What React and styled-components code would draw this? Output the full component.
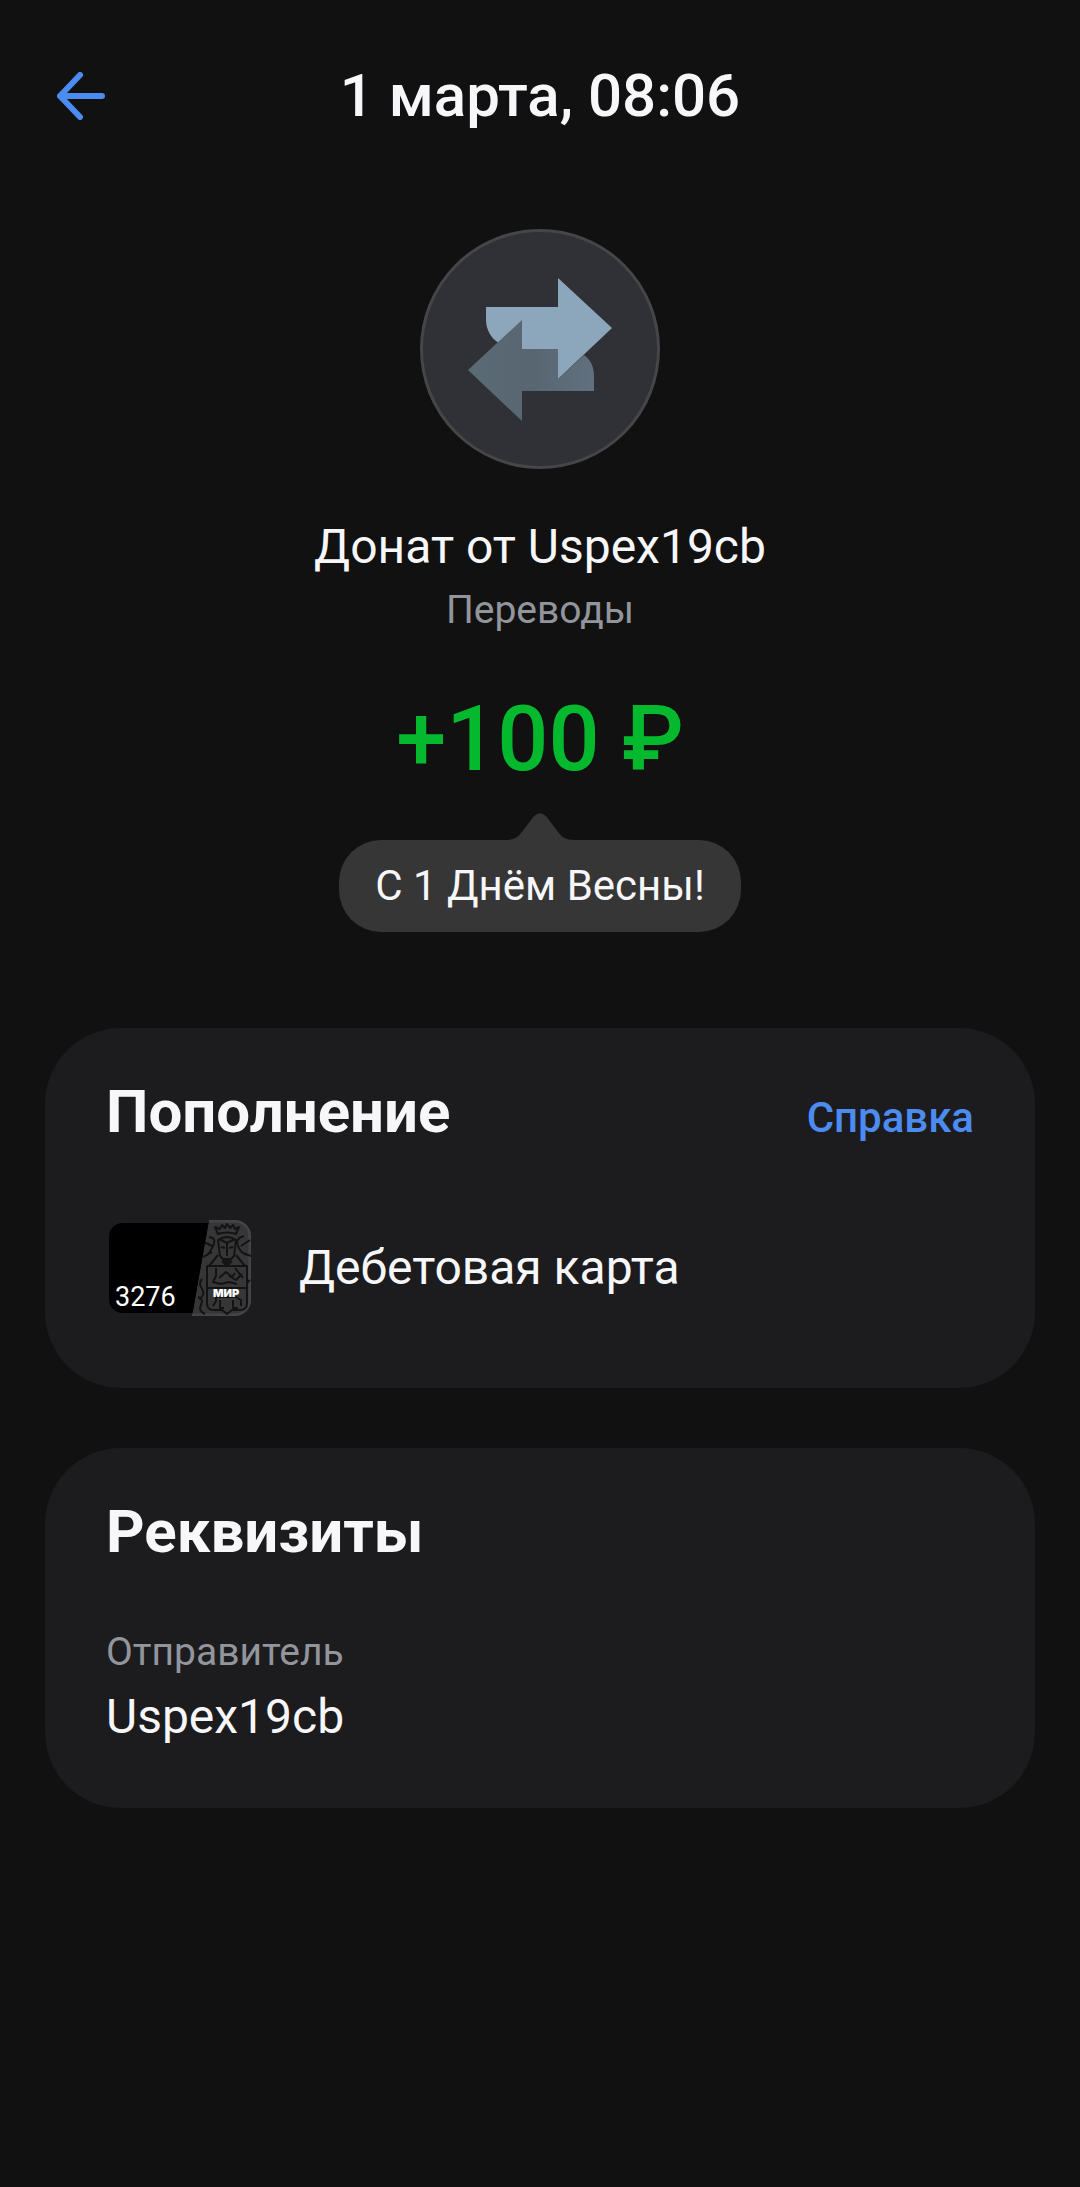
import React from "react";
import styled, { createGlobalStyle } from "styled-components";

const GlobalStyle = createGlobalStyle`
  * {
    box-sizing: border-box;
  }

  body {
    margin: 0;
    background: #111111;
    color: #f7f7fa;
    font-family: Roboto, "Noto Sans", sans-serif;
  }
`;

const Page = styled.div`
  min-height: 100vh;
  padding-bottom: 60px;
`;

// Header
const Header = styled.header`
  display: grid;
  grid-template-columns: 72px 1fr 72px;
  align-items: center;
  padding: 60px 45px 0;
`;

const BackButton = styled.button`
  display: flex;
  justify-content: center;
  padding: 0;
  border: 0;
  background: none;
  color: #4c8bf0;
  cursor: pointer;
`;

const Title = styled.h1`
  margin: 0;
  font-size: 60px;
  line-height: 72px;
  font-weight: 500;
  text-align: center;
`;

// Operation summary
const Summary = styled.section`
  display: flex;
  flex-direction: column;
  align-items: center;
  padding: 97px 45px 96px;
  text-align: center;
`;

const Avatar = styled.div`
  display: flex;
  width: 240px;
  height: 240px;
  border: 3px solid #464648;
  border-radius: 50%;
  background: #303136;
`;

const Name = styled.h2`
  margin: 48px 0 9px;
  font-size: 48px;
  line-height: 60px;
  font-weight: 400;
`;

const Category = styled.p`
  margin: 0;
  color: #93959c;
  font-size: 39px;
  line-height: 48px;
`;

const Amount = styled.p`
  margin: 54px 0 48px;
  color: #05b92f;
  font-size: 90px;
  line-height: 104px;
  font-weight: 500;
`;

const Message = styled.p`
  position: relative;
  margin: 0;
  padding: 20px 36px;
  border-radius: 42px;
  background: #363636;
  font-size: 42px;
  line-height: 52px;
`;

const MessageTail = styled.svg`
  position: absolute;
  bottom: 100%;
  left: 50%;
  transform: translateX(-50%);
`;

// Cards
const Cards = styled.main`
  display: flex;
  flex-direction: column;
  gap: 60px;
  padding: 0 45px;
`;

const Card = styled.section`
  padding: 48px 61px 60px;
  border-radius: 76px;
  background: #1c1c1e;
`;

const CardHeader = styled.div`
  display: flex;
  align-items: baseline;
  justify-content: space-between;
  margin-bottom: 60px;
`;

const CardTitle = styled.h2`
  margin: 0;
  font-size: 60px;
  line-height: 72px;
  font-weight: 700;
`;

const CardLink = styled.a`
  color: #4c8bf0;
  font-size: 42px;
  line-height: 52px;
  font-weight: 500;
  text-decoration: none;
`;

const Account = styled.div`
  display: flex;
  align-items: center;
  gap: 43px;
  height: 120px;
  font-size: 48px;
  line-height: 60px;
`;

const Details = styled.dl`
  margin: 0;
`;

const DetailLabel = styled.dt`
  margin-bottom: 10px;
  color: #93959c;
  font-size: 39px;
  line-height: 48px;
`;

const DetailValue = styled.dd`
  margin: 0;
  font-size: 48px;
  line-height: 62px;
`;

function BackIcon() {
  return (
    <svg width="48" height="48" viewBox="0 0 48 48" fill="none" aria-hidden="true">
      <path
        d="M23 3 3 24l20 21M3 24h42"
        stroke="currentColor"
        strokeWidth="6"
        strokeLinecap="round"
        strokeLinejoin="round"
      />
    </svg>
  );
}

function TransferIcon() {
  return (
    <svg width="234" height="234" viewBox="4 3 234 234" aria-hidden="true">
      <defs>
        <linearGradient id="back-arrow" x1="0" x2="1">
          <stop offset="0" stopColor="#5b6b76" />
          <stop offset="0.5" stopColor="#576671" />
          <stop offset="1" stopColor="#61707e" />
        </linearGradient>
      </defs>
      <path
        d="M67 78h72V49l54 50-54 51v-30h-36c-22 0-36-12-36-30z"
        fill="#8ca7bb"
      />
      <path
        d="M49 141l54-50v29h36v30l26-24c7 5 10 12 10 21v15h-72v30z"
        fill="url(#back-arrow)"
      />
    </svg>
  );
}

function BankCard() {
  return (
    <svg width="150" height="100" viewBox="0 0 150 100" role="img" aria-label="Карта 3276, МИР">
      <defs>
        <clipPath id="card-side">
          <path d="M103 2h26a16 16 0 0 1 16 16v64a16 16 0 0 1-16 16H86z" />
        </clipPath>
      </defs>
      <rect x="3" y="5" width="138" height="90" rx="14" fill="#000" />
      <g clipPath="url(#card-side)">
        <path d="M103 2h47v96H86z" fill="#363636" />
        <path d="M103 3h26a15 15 0 0 1 15 15v64a15 15 0 0 1-15 15H86" fill="none" stroke="#444" strokeWidth="3" />
        <g fill="none" stroke="#131313" strokeWidth="2" strokeLinejoin="round">
          {/* Crown and helmet */}
          <path d="M112 16l-3-7 5 2 2-4 3 3 2-4 3 4 3-3 2 4 4-2-3 7q-9-3-18 0z" />
          <path d="M112 22q9-6 18 0l-2 16-7 7-7-7z" />
          <path d="M113 21l8 4 8-4M121 25v13M115 29l4 1M127 29l-4 1" />
          <path d="M112 37l-9 11h36l-9-11M116 43l5 5 5-5M118 41h6M121 41v6" />
          {/* Ribbons */}
          <path d="M103 19q8 1 4 9t-6 9M138 18q-9 2-6 10t10 9M98 24l8 4M144 22l-9 6M97 39l9-5M145 38l-10-4" />
          {/* Shield */}
          <path d="M101 48h40v37q0 7-7 7h-8l-5 4-5-4h-8q-7 0-7-7zM101 70h40" />
          <path d="M110 50v8l-3 6 8 2 8-2 8 2M113 60l7-6 6 5 3-4M123 58l7 4 6-6M129 50l8 10" />
          <path d="M107 88l3-5v-4h20l5 3v6M114 82v8h4M127 82v8h5" />
          <path d="M96 61q-4 4 0 10t-3 10M92 79q6 2 3 8t4 9M144 62l-3 3" />
        </g>
      </g>
      <text x="9" y="88" fill="#fff" fontFamily="Roboto, sans-serif" fontSize="27">
        3276
      </text>
      <text x="107" y="79" fill="#fff" fontFamily="Inter, Roboto, sans-serif" fontSize="11" fontWeight="900">
        МИР
      </text>
    </svg>
  );
}

function App() {
  return (
    <>
      <GlobalStyle />
      <Page>
        <Header>
          <BackButton type="button" aria-label="Назад">
            <BackIcon />
          </BackButton>
          <Title>1 марта, 08:06</Title>
        </Header>

        <Summary>
          <Avatar>
            <TransferIcon />
          </Avatar>
          <Name>Донат от Uspex19cb</Name>
          <Category>Переводы</Category>
          <Amount>+100 ₽</Amount>
          <Message>
            <MessageTail width="70" height="28" viewBox="0 0 70 28" aria-hidden="true">
              <path d="M0 28c10 0 13-3 17-8l9-12c6-9 12-9 18 0l9 12c4 5 7 8 17 8z" fill="#363636" />
            </MessageTail>
            С 1 Днём Весны!
          </Message>
        </Summary>

        <Cards>
          <Card>
            <CardHeader>
              <CardTitle>Пополнение</CardTitle>
              <CardLink href="#">Справка</CardLink>
            </CardHeader>
            <Account>
              <BankCard />
              Дебетовая карта
            </Account>
          </Card>

          <Card>
            <CardHeader>
              <CardTitle>Реквизиты</CardTitle>
            </CardHeader>
            <Details>
              <DetailLabel>Отправитель</DetailLabel>
              <DetailValue>Uspex19cb</DetailValue>
            </Details>
          </Card>
        </Cards>
      </Page>
    </>
  );
}

export default App;
